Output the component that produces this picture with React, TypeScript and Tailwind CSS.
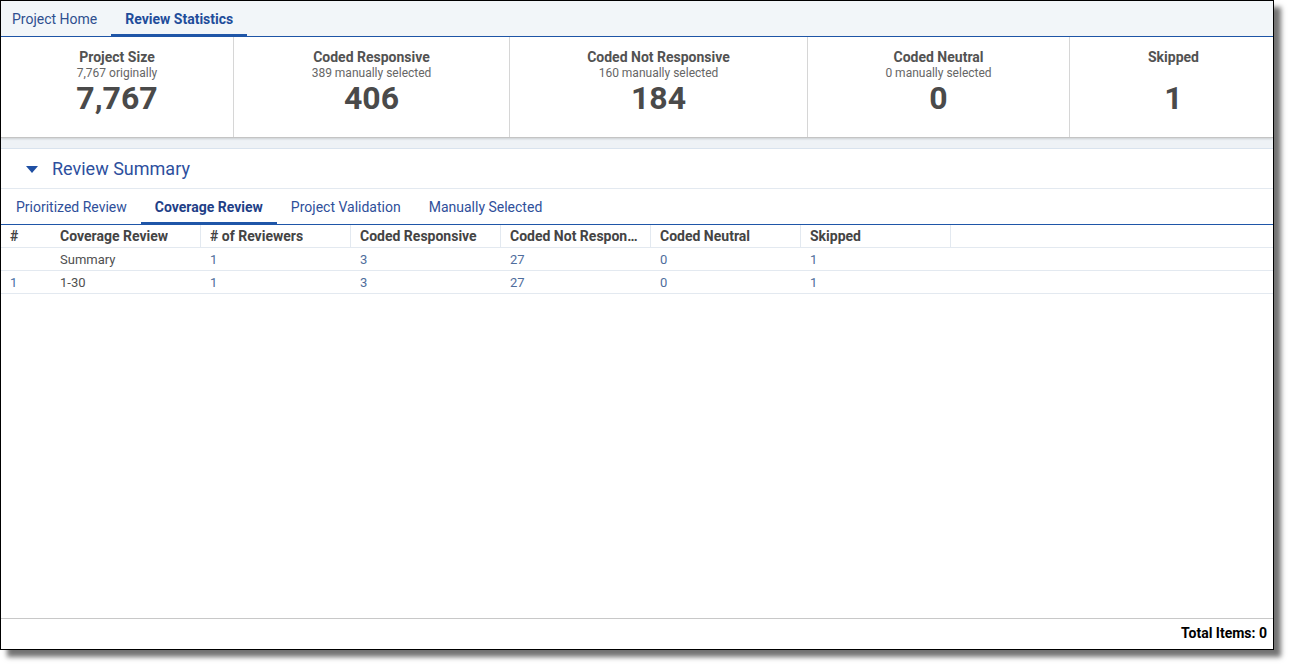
import React from "react";

const stats = [
  { title: "Project Size", sub: "7,767 originally", value: "7,767", w: "w-[233px]" },
  { title: "Coded Responsive", sub: "389 manually selected", value: "406", w: "w-[276px]" },
  { title: "Coded Not Responsive", sub: "160 manually selected", value: "184", w: "w-[298px]" },
  { title: "Coded Neutral", sub: "0 manually selected", value: "0", w: "w-[262px]" },
  { title: "Skipped", sub: "", value: "1", w: "flex-1 pl-[4px]" },
];

const headers = ["Coverage Review", "# of Reviewers", "Coded Responsive", "Coded Not Responsive", "Coded Neutral", "Skipped"];
const rows = [
  ["", "Summary", "1", "3", "27", "0", "1"],
  ["1", "1-30", "1", "3", "27", "0", "1"],
];

export default function App() {
  return (
    <div className="w-[1289px] h-[664px] bg-white relative" style={{ fontFamily: "Roboto, 'Noto Sans', sans-serif" }}>
      <div className="w-[1274px] h-[650px] border border-black bg-white flex flex-col shadow-[7px_7px_5px_rgba(0,0,0,0.55)]">
        {/* top tabs */}
        <div className="h-[36px] bg-[#f2f6f9] border-b border-[#1f56a8] flex items-stretch shrink-0">
          <div className="pl-[11px] pr-[14px] pt-[2px] flex items-center text-[14px] text-[#2f4f8f]">Project Home</div>
          <div className="px-[14px] flex items-center text-[14px] font-bold text-[#1f4d9b] border-b-[3px] border-[#1f56a8] mb-[-1px] pt-[4px]">Review Statistics</div>
        </div>
        {/* stats */}
        <div className="h-[101px] flex border-b border-[#c4c4c4] shadow-[0_1px_2px_rgba(0,0,0,0.15)] shrink-0 relative">
          {stats.map((s, i) => (
            <div key={i} className={`${s.w} shrink-0 flex flex-col items-center pt-[12px] ${i < stats.length - 1 ? "border-r border-[#d6d6d6]" : ""}`}>
              <div className="text-[14px] leading-[17px] font-bold text-[#525252]">{s.title}</div>
              <div className="text-[12px] leading-[14px] text-[#666] h-[14px]">{s.sub}</div>
              <div className="text-[32px] leading-[32px] font-bold text-[#4a4a4a] mt-[2px]">{s.value}</div>
            </div>
          ))}
        </div>
        <div className="h-[11px] bg-[#eef2f6] border-b border-[#d9e3ee] shrink-0" />
        {/* review summary header */}
        <div className="h-[40px] flex items-center border-b border-[#e3e9f0] shrink-0 pl-[25px]">
          <svg width="12" height="7" viewBox="0 0 12 7" className="mr-[14px] mt-[1px]">
            <polygon points="0,0 12,0 6,7" fill="#1f4fa3" />
          </svg>
          <span className="text-[18px] text-[#2d4f9e]">Review Summary</span>
        </div>
        {/* sub tabs */}
        <div className="h-[36px] flex items-stretch border-b border-[#1f56a8] shrink-0 pl-[1px]">
          {["Prioritized Review", "Coverage Review", "Project Validation", "Manually Selected"].map((t, i) => (
            <div
              key={t}
              className={`px-[14px] flex items-center text-[14px] ${i === 1 ? "font-bold text-[#1f3f87] border-b-[3px] border-[#1f56a8] mb-[-1px] pt-[4px]" : "text-[#2f4f9a] pt-[2px]"}`}
            >
              {t}
            </div>
          ))}
        </div>
        {/* table */}
        <div className="flex-1 flex flex-col text-[13px]">
          <div className="h-[23px] flex border-b border-[#e3e9f0]">
            <div className="w-[50px] pl-[9px] flex items-center font-bold text-[14px] text-[#444]">#</div>
            {headers.map((h) => (
              <div key={h} className="w-[150px] px-[9px] flex items-center font-bold text-[14px] text-[#444] border-r border-[#e3e9f0] min-w-0">
                <span className="truncate">{h}</span>
              </div>
            ))}
          </div>
          {rows.map((r, ri) => (
            <div key={ri} className="h-[23px] flex border-b border-[#e3e9f0] pt-[1px]">
              <div className="w-[50px] pl-[9px] flex items-center text-[#4a6fa5]">{r[0]}</div>
              {r.slice(1).map((c, ci) => (
                <div key={ci} className={`w-[150px] px-[9px] flex items-center ${ci === 0 ? "text-[#505050]" : "text-[#4f6d9c]"}`}>
                  {c}
                </div>
              ))}
            </div>
          ))}
        </div>
        {/* footer */}
        <div className="h-[31px] border-t border-[#c8c8c8] flex items-center justify-end pr-[6px] pb-[1px] shrink-0">
          <span className="text-[14px] font-bold text-black">Total Items: 0</span>
        </div>
      </div>
    </div>
  );
}
